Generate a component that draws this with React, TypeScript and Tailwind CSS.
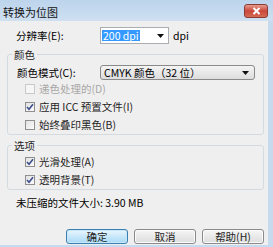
import type { ReactNode } from "react"

const font = { fontFamily: '"Noto Sans CJK SC", "Noto Sans", sans-serif' }

function Checkbox({ checked, disabled, label }: { checked?: boolean; disabled?: boolean; label: string }) {
  return (
    <div className="flex items-center gap-[4px] h-[18px]">
      <div
        className={
          disabled
            ? "w-[10px] h-[10px] border border-[#c9c9c9] bg-[#f6f6f6]"
            : "w-[10px] h-[10px] border border-[#8f8f8f] bg-gradient-to-br from-[#e2e2e2] to-[#fbfbfb] flex items-center justify-center"
        }
      >
        {checked && (
          <svg width="8" height="8" viewBox="0 0 8 8">
            <path d="M1 4 L3 6.2 L7 1.2" fill="none" stroke="#3c4f8c" strokeWidth="1.6" />
          </svg>
        )}
      </div>
      <span className={disabled ? "text-[#a7a7a7]" : "text-[#1e1e1e]"}>{label}</span>
    </div>
  )
}

function Group({ title, children, className }: { title: string; children: ReactNode; className: string }) {
  return (
    <fieldset className={"border border-[#d3dbe0] rounded-[3px] ml-[7px] mr-[4px] " + className}>
      <legend className="ml-[4px] px-[2px] leading-[11px] text-[#1e1e1e]">{title}</legend>
      {children}
    </fieldset>
  )
}

function Button({ label, primary }: { label: string; primary?: boolean }) {
  return (
    <div
      className={
        "w-[62px] h-[15px] rounded-[3px] border flex items-center justify-center text-[#1e1e1e] " +
        (primary
          ? "border-[#3c7fb1] bg-gradient-to-b from-[#eaf6fd] to-[#a7d9f5] shadow-[inset_0_0_0_1px_#c5e7f9]"
          : "border-[#8a8a8a] bg-gradient-to-b from-[#f6f6f6] to-[#dcdcdc] shadow-[inset_0_0_0_1px_#fbfbfb]")
      }
    >
      {label}
    </div>
  )
}

export default function App() {
  return (
    <div className="w-[273px] h-[247px] bg-[#c6dbef] flex flex-col overflow-hidden text-[10.5px] leading-[12px]" style={font}>
      {/* title bar */}
      <div className="h-[21px] shrink-0 flex items-start justify-between bg-gradient-to-b from-[#bcd4ec] to-[#cfe0f1]">
        <span className="pl-[3px] pt-[6px] text-[11px] leading-[12px] text-[#111]">转换为位图</span>
        <div className="mt-[4px] mr-[5px] w-[24px] h-[14px] rounded-[3px] border border-[#8c3b33] bg-gradient-to-b from-[#e69a8e] via-[#c9473a] to-[#d36a55] flex items-center justify-center">
          <svg width="9" height="8" viewBox="0 0 9 8">
            <path d="M1.5 1 L7.5 7 M7.5 1 L1.5 7" stroke="#fff" strokeWidth="2" />
          </svg>
        </div>
      </div>

      {/* client */}
      <div className="flex-1 mr-[5px] mb-[2px] bg-[#f0efef] flex flex-col">
        <div className="flex items-center mt-[6px] h-[17px]">
          <span className="pl-[16px] w-[100px]">分辨率(E):</span>
          <div className="w-[69px] h-[17px] border border-[#abadb3] bg-white flex items-center justify-between pl-[1px] pr-[4px]">
            <span className="bg-[#3399ff] text-white px-[1px] leading-[11px]">200 dpi</span>
            <svg width="7" height="4" viewBox="0 0 7 4">
              <path d="M0 0 H7 L3.5 4 Z" fill="#111" />
            </svg>
          </div>
          <span className="pl-[4px]">dpi</span>
        </div>

        <Group title="颜色" className="mt-[5px]">
          <div className="flex items-center h-[15px] mt-[5px]">
            <span className="pl-[9px] w-[92px]">颜色模式(C):</span>
            <div className="w-[155px] h-[15px] rounded-[3px] border border-[#8a8a8a] bg-gradient-to-b from-[#f4f4f4] to-[#dddddd] flex items-center justify-between pl-[3px] pr-[5px]">
              <span>CMYK 颜色（32 位）</span>
              <svg width="7" height="4" viewBox="0 0 7 4">
                <path d="M0 0 H7 L3.5 4 Z" fill="#111" />
              </svg>
            </div>
          </div>
          <div className="pl-[17px] flex flex-col">
            <Checkbox disabled label="递色处理的(D)" />
            <Checkbox checked label="应用 ICC 预置文件(I)" />
            <Checkbox label="始终叠印黑色(B)" />
          </div>
        </Group>

        <Group title="选项" className="mt-[5px]">
          <div className="pl-[17px] mt-[2px] flex flex-col">
            <Checkbox checked label="光滑处理(A)" />
            <Checkbox checked label="透明背景(T)" />
          </div>
        </Group>

        <div className="pl-[16px] mt-[7px]">未压缩的文件大小: 3.90 MB</div>

        <div className="flex justify-end gap-[6px] pr-[4px] mt-[20px]">
          <Button primary label="确定" />
          <Button label="取消" />
          <Button label="帮助(H)" />
        </div>
      </div>
    </div>
  )
}
